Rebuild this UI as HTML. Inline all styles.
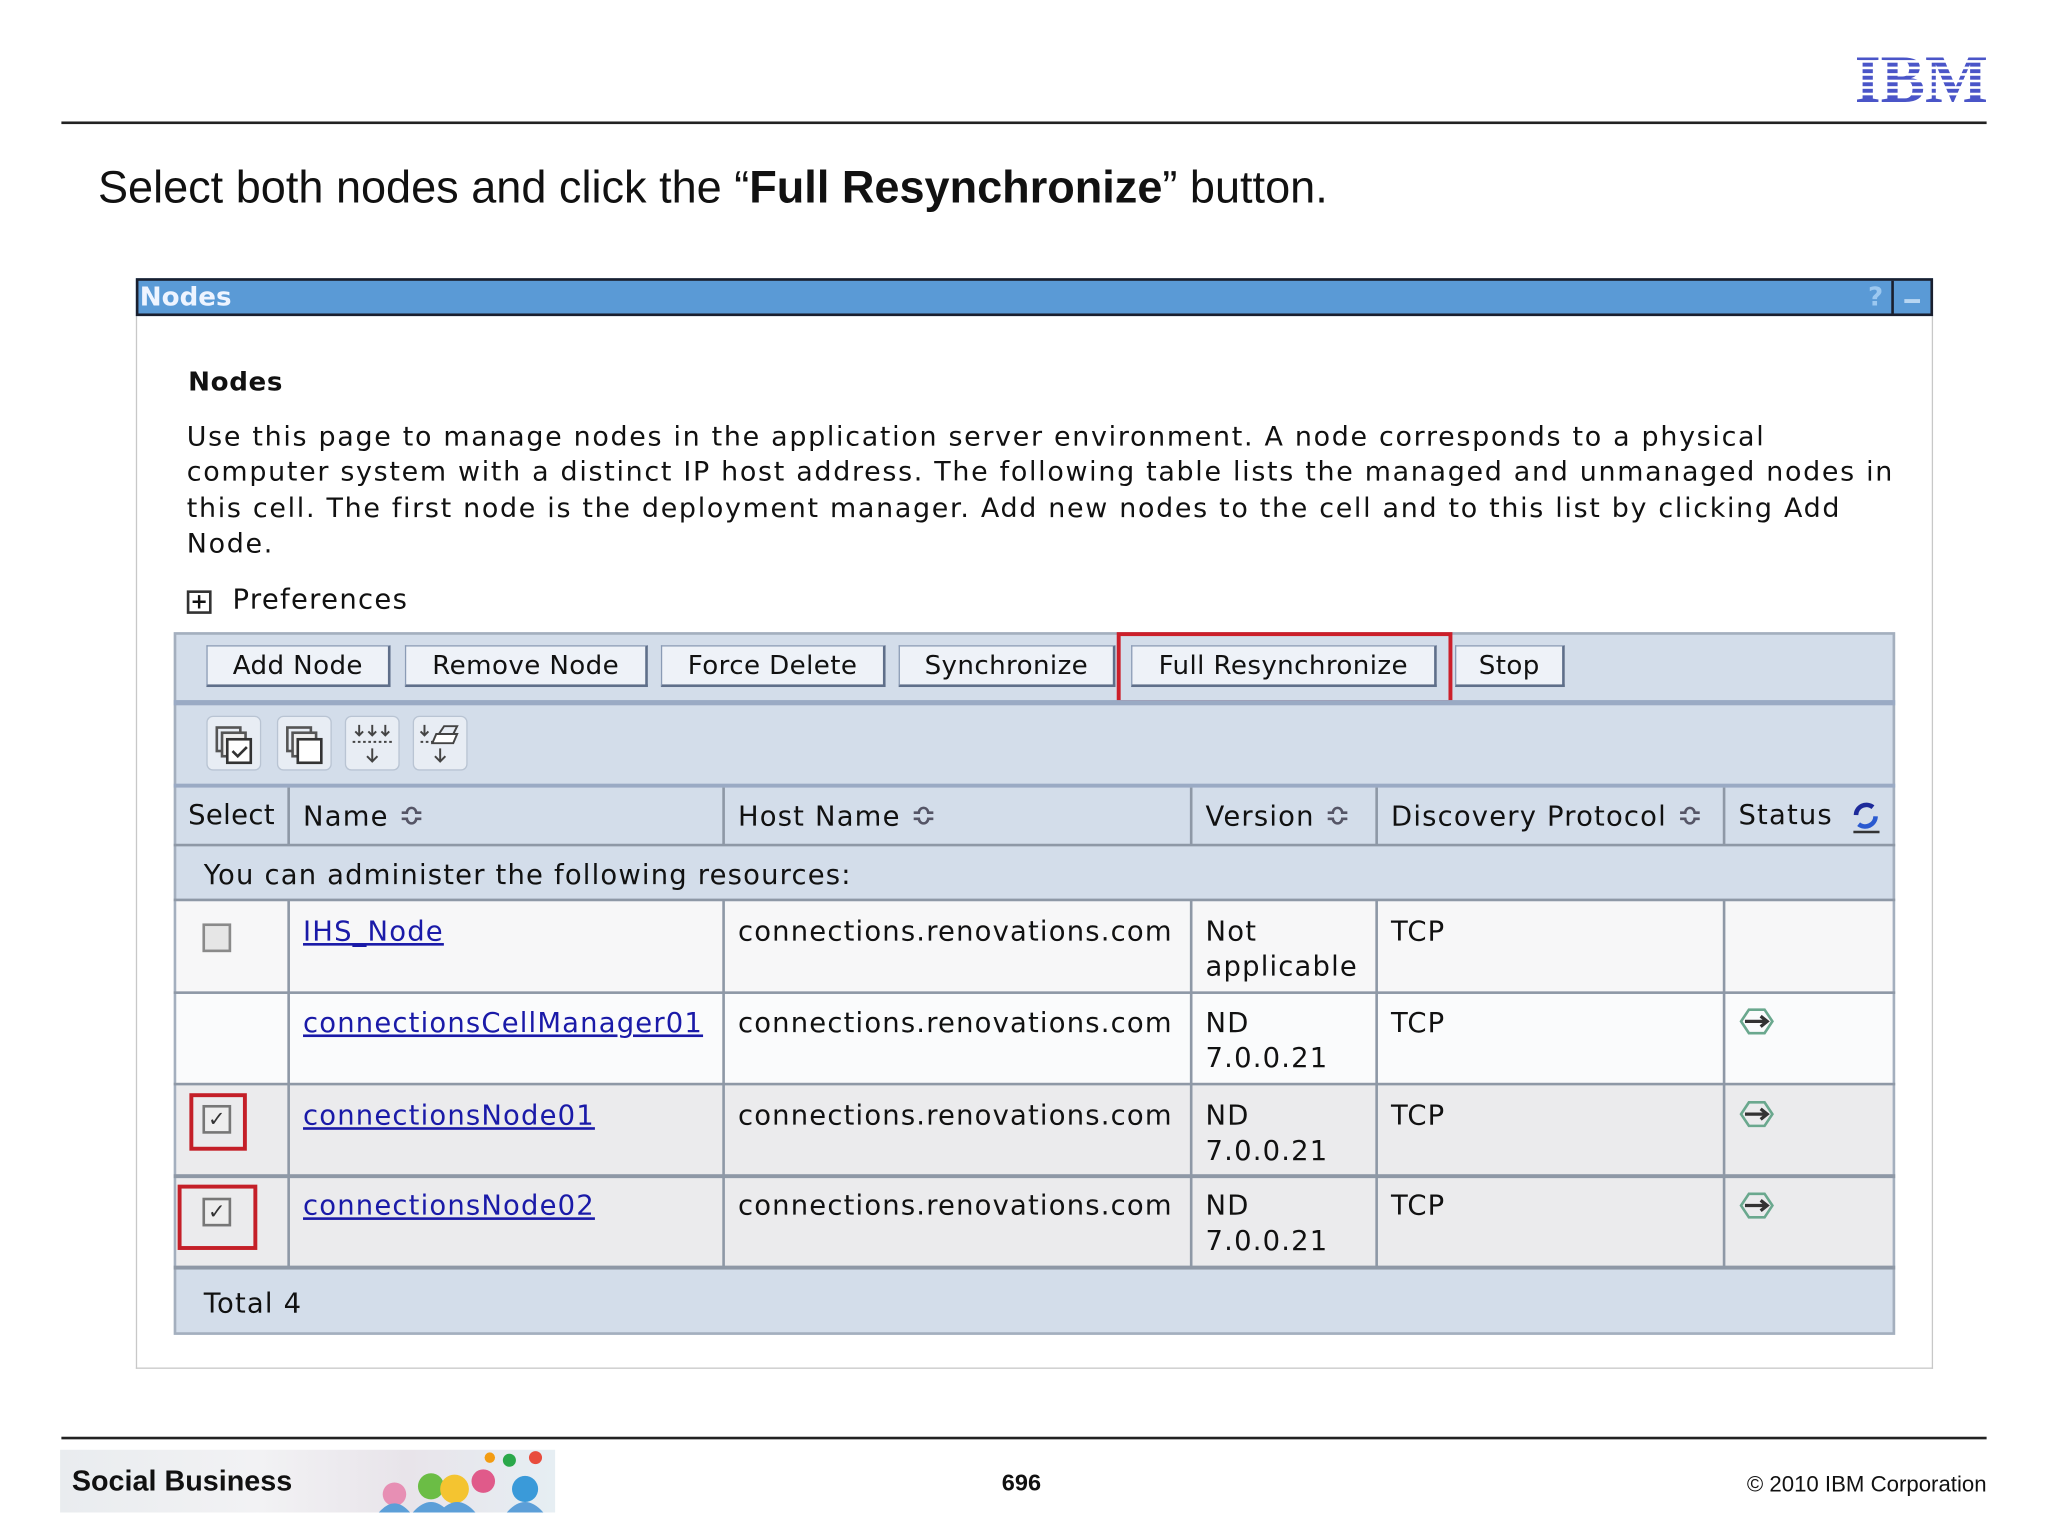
<!DOCTYPE html>
<html><head><meta charset="utf-8"><style>
*{margin:0;padding:0;box-sizing:border-box}
html,body{width:2048px;height:1536px;overflow:hidden;background:#fff}
#s{position:absolute;left:0;top:0;width:1568px;height:1176px;transform:scale(1.306122);transform-origin:0 0;font-family:"DejaVu Sans",Verdana,sans-serif;color:#111}
.a{position:absolute;white-space:nowrap}
.btn{position:absolute;top:494px;height:32px;background:#eef2f8;border:1px solid #8a9bb5;border-bottom:2px solid #5f6f8a;border-right:2px solid #5f6f8a;font-size:20px;line-height:29px;text-align:center;color:#111;letter-spacing:0.3px}
.vl{position:absolute;width:2px;background:#8e98a6}
.hl{position:absolute;left:133px;width:1318px;height:2px;background:#8e98a6}
.c{font-size:21px;position:absolute;white-space:nowrap;line-height:27px;letter-spacing:0.9px}
.lk{color:#1a1aa8;text-decoration:underline}
.ico{position:absolute;top:548px;width:42px;height:42px;background:#e8edf4;border:1px solid #b9c4d3;border-radius:5px}
.ar{color:#556;font-size:24px;letter-spacing:0}
</style></head><body><div id="s">
<svg class="a" style="left:1420px;top:38px" width="102" height="42" viewBox="0 0 102 42">
<text x="0" y="40" font-family="Liberation Serif,serif" font-weight="bold" font-size="52" fill="#4a55c8" textLength="102" lengthAdjust="spacingAndGlyphs">IBM</text>
<g fill="#fff"><rect x="0" y="3" width="102" height="2"/><rect x="0" y="8" width="102" height="2"/><rect x="0" y="13" width="102" height="2"/><rect x="0" y="18" width="102" height="2"/><rect x="0" y="23" width="102" height="2"/><rect x="0" y="28" width="102" height="2"/><rect x="0" y="33" width="102" height="2"/></g></svg>
<div class="a" style="left:47px;top:93px;width:1474px;height:2px;background:#222"></div>
<div class="a" style="left:75px;top:125px;font-family:'Liberation Sans',Arial,sans-serif;font-size:34.5px">Select both nodes and click the “<b>Full Resynchronize</b>” button.</div>

<div class="a" style="left:104px;top:241px;width:1376px;height:807px;border:1px solid #c8c8c8;border-top:none"></div>
<div class="a" style="left:104px;top:213px;width:1376px;height:29px;background:#5a9ad6;border:2px solid #1a1f2e"></div>
<div class="a" style="left:107px;top:214px;font-size:20px;font-weight:bold;color:#eef4ff;line-height:27px">Nodes</div>
<div class="a" style="left:1424px;top:215px;width:26px;height:25px;font-size:20px;font-weight:bold;color:#9cc8f0;line-height:25px;text-align:center;border-right:2px solid #1a1f2e">?</div>
<div class="a" style="left:1458px;top:229px;width:12px;height:3px;background:#b8d6f2"></div>

<div class="a" style="left:144px;top:280px;font-size:20px;font-weight:bold;letter-spacing:0.5px">Nodes</div>
<div class="a" style="left:143px;top:321px;font-size:20.6px;line-height:27.3px;letter-spacing:1.3px">Use this page to manage nodes in the application server environment. A node corresponds to a physical<br>computer system with a distinct IP host address. The following table lists the managed and unmanaged nodes in<br>this cell. The first node is the deployment manager. Add new nodes to the cell and to this list by clicking Add<br>Node.</div>
<div class="a" style="left:143px;top:452px;width:19px;height:18px;border:2px solid #333;font-size:16px;line-height:13px;text-align:center;font-weight:bold">+</div>
<div class="a" style="left:178px;top:447px;font-size:21px;letter-spacing:1px">Preferences</div>

<div class="a" style="left:133px;top:484px;width:1318px;height:538px;background:#d3ddea;border:2px solid #a4afbe"></div>
<div class="btn" style="left:158px;width:141px">Add Node</div>
<div class="btn" style="left:310px;width:186px">Remove Node</div>
<div class="btn" style="left:506px;width:172px">Force Delete</div>
<div class="btn" style="left:688px;width:166px">Synchronize</div>
<div class="btn" style="left:866px;width:234px">Full Resynchronize</div>
<div class="btn" style="left:1114px;width:84px">Stop</div>
<div class="a" style="left:855px;top:484px;width:257px;height:55px;border:3px solid #cc1f2a"></div>
<div class="a" style="left:133px;top:536px;width:1318px;height:4px;background:#9aaac4"></div>
<div class="ico" style="left:158px"><svg width="40" height="40"><rect x="7" y="8" width="18" height="18" fill="none" stroke="#555" stroke-width="2"/><rect x="11" y="12" width="18" height="18" fill="#eee" stroke="#555" stroke-width="2"/><rect x="15" y="17" width="18" height="18" fill="#fff" stroke="#333" stroke-width="2"/><path d="M19 26l4 4 7-7" stroke="#333" stroke-width="2" fill="none"/></svg></div>
<div class="ico" style="left:212px"><svg width="40" height="40"><rect x="7" y="8" width="18" height="18" fill="none" stroke="#555" stroke-width="2"/><rect x="11" y="12" width="18" height="18" fill="#eee" stroke="#555" stroke-width="2"/><rect x="15" y="17" width="18" height="18" fill="#fff" stroke="#333" stroke-width="2"/></svg></div>
<div class="ico" style="left:264px"><svg width="40" height="40" stroke="#444" stroke-width="1.5" fill="none"><path d="M10 6v8M7 11l3 3 3-3M20 6v8M17 11l3 3 3-3M30 6v8M27 11l3 3 3-3M20 24v10M16 30l4 4 4-4"/><path d="M5 19h30" stroke-dasharray="2 2"/></svg></div>
<div class="ico" style="left:316px"><svg width="40" height="40" stroke="#444" stroke-width="1.5" fill="none"><path d="M8 6v8M5 11l3 3 3-3M20 24v10M16 30l4 4 4-4"/><path d="M5 19h12" stroke-dasharray="2 2"/><path d="M17 13h16l-3 7H14z" fill="#fff"/><path d="M19 13l4-6h10l-3 6"/></svg></div>
<div class="a" style="left:133px;top:600px;width:1318px;height:3px;background:#9aaac4"></div>

<div class="a" style="left:135px;top:690px;width:1314px;height:70px;background:#f7f7f8"></div>
<div class="a" style="left:135px;top:761px;width:1314px;height:70px;background:#fafbfc"></div>
<div class="a" style="left:135px;top:831px;width:1314px;height:70px;background:#ebebed"></div>
<div class="a" style="left:135px;top:902px;width:1314px;height:69px;background:#ebebed"></div>
<div class="hl" style="top:646px"></div>
<div class="hl" style="top:688px"></div>
<div class="hl" style="top:759px"></div>
<div class="hl" style="top:829px"></div>
<div class="hl" style="top:899px;height:3px"></div>
<div class="hl" style="top:969px;height:3px"></div>
<div class="vl" style="left:220px;top:603px;height:44px"></div>
<div class="vl" style="left:553px;top:603px;height:44px"></div>
<div class="vl" style="left:911px;top:603px;height:44px"></div>
<div class="vl" style="left:1053px;top:603px;height:44px"></div>
<div class="vl" style="left:1319px;top:603px;height:44px"></div>
<div class="vl" style="left:220px;top:689px;height:282px"></div>
<div class="vl" style="left:553px;top:689px;height:282px"></div>
<div class="vl" style="left:911px;top:689px;height:282px"></div>
<div class="vl" style="left:1053px;top:689px;height:282px"></div>
<div class="vl" style="left:1319px;top:689px;height:282px"></div>

<div class="c" style="left:144px;top:611px;letter-spacing:0.3px">Select</div>
<div class="c" style="left:232px;top:611px">Name <span class="ar">≎</span></div>
<div class="c" style="left:565px;top:611px">Host Name <span class="ar">≎</span></div>
<div class="c" style="left:923px;top:611px">Version <span class="ar">≎</span></div>
<div class="c" style="left:1065px;top:611px">Discovery Protocol <span class="ar">≎</span></div>
<div class="c" style="left:1331px;top:611px">Status</div>
<svg class="a" style="left:1416px;top:612px" width="26" height="28"><path d="M5 12a8 8 0 0 1 13-6" stroke="#1d2a9a" stroke-width="3.5" fill="none"/><path d="M20 13a8 8 0 0 1-13 6" stroke="#2a5ad0" stroke-width="3.5" fill="none"/><path d="M3 25h20" stroke="#333" stroke-width="2"/></svg>
<div class="c" style="left:156px;top:657px">You can administer the following resources:</div>

<div class="a" style="left:155px;top:707px;width:22px;height:22px;border:2px solid #8a8a8a;background:#e6e6e6"></div>
<div class="c lk" style="left:232px;top:700px">IHS_Node </div>
<div class="c" style="left:565px;top:700px">connections.renovations.com</div>
<div class="c" style="left:923px;top:700px">Not<br>applicable</div>
<div class="c" style="left:1065px;top:700px">TCP</div>

<div class="c lk" style="left:232px;top:770px">connectionsCellManager01 </div>
<div class="c" style="left:565px;top:770px">connections.renovations.com</div>
<div class="c" style="left:923px;top:770px">ND<br>7.0.0.21</div>
<div class="c" style="left:1065px;top:770px">TCP</div>

<div class="a" style="left:145px;top:837px;width:44px;height:44px;border:3px solid #c41f28"></div>
<div class="a" style="left:155px;top:846px;width:22px;height:22px;border:2px solid #777;background:#eee;font-size:16px;line-height:18px;text-align:center;color:#333">✓</div>
<div class="c lk" style="left:232px;top:841px">connectionsNode01 </div>
<div class="c" style="left:565px;top:841px">connections.renovations.com</div>
<div class="c" style="left:923px;top:841px">ND<br>7.0.0.21</div>
<div class="c" style="left:1065px;top:841px">TCP</div>

<div class="a" style="left:136px;top:907px;width:61px;height:50px;border:3px solid #c41f28"></div>
<div class="a" style="left:155px;top:917px;width:22px;height:22px;border:2px solid #777;background:#eee;font-size:16px;line-height:18px;text-align:center;color:#333">✓</div>
<div class="c lk" style="left:232px;top:910px">connectionsNode02 </div>
<div class="c" style="left:565px;top:910px">connections.renovations.com</div>
<div class="c" style="left:923px;top:910px">ND<br>7.0.0.21</div>
<div class="c" style="left:1065px;top:910px">TCP</div>

<svg class="a" style="left:1330px;top:770px" width="30" height="24"><path d="M9 3h12l6 9-6 9H9l-6-9z" fill="none" stroke="#6aa88e" stroke-width="2"/><path d="M6 12h17M18 8l5 4-5 4" stroke="#333" stroke-width="2.5" fill="none"/></svg>
<svg class="a" style="left:1330px;top:841px" width="30" height="24"><path d="M9 3h12l6 9-6 9H9l-6-9z" fill="none" stroke="#6aa88e" stroke-width="2"/><path d="M6 12h17M18 8l5 4-5 4" stroke="#333" stroke-width="2.5" fill="none"/></svg>
<svg class="a" style="left:1330px;top:911px" width="30" height="24"><path d="M9 3h12l6 9-6 9H9l-6-9z" fill="none" stroke="#6aa88e" stroke-width="2"/><path d="M6 12h17M18 8l5 4-5 4" stroke="#333" stroke-width="2.5" fill="none"/></svg>

<div class="c" style="left:156px;top:985px">Total 4</div>

<div class="a" style="left:47px;top:1100px;width:1474px;height:2px;background:#222"></div>
<div class="a" style="left:46px;top:1110px;width:379px;height:48px;background:linear-gradient(90deg,#e9ecef 0%,#f2f2f4 40%,#e8e4ea 70%,#e6eef3 100%)"></div>
<svg class="a" style="left:280px;top:1110px" width="145" height="48"><circle cx="22" cy="34" r="9" fill="#e78fb4"/><circle cx="50" cy="28" r="10" fill="#6bbd45"/><circle cx="68" cy="30" r="11" fill="#f4c430"/><circle cx="90" cy="24" r="9" fill="#e05a8a"/><circle cx="122" cy="30" r="10" fill="#3a9ad9"/><circle cx="110" cy="8" r="5" fill="#2aa84a"/><circle cx="130" cy="6" r="5" fill="#e84c3d"/><circle cx="95" cy="6" r="4" fill="#f39c12"/><path d="M10 48q12-14 24 0zM36 48q14-16 28 0zM56 48q14-16 28 0zM108 48q14-16 28 0z" fill="#5c9fd8"/></svg>
<div class="a" style="left:55px;top:1121px;font-family:'Liberation Sans',Arial,sans-serif;font-size:22px;font-weight:bold">Social Business</div>
<div class="a" style="left:767px;top:1125px;font-family:'Liberation Sans',Arial,sans-serif;font-size:18px;font-weight:bold">696</div>
<div class="a" style="right:47px;top:1127px;font-family:'Liberation Sans',Arial,sans-serif;font-size:17px">© 2010 IBM Corporation</div>
</div></body></html>
